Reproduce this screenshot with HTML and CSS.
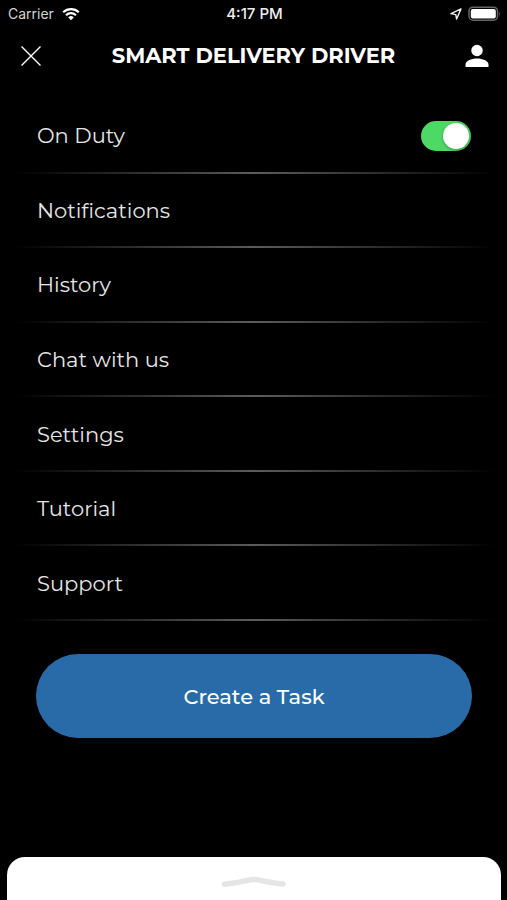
FILE: index.html
```html
<!DOCTYPE html>
<html lang="en">
<head>
<meta charset="utf-8">
<meta name="viewport" content="width=device-width, initial-scale=1">
<title>Smart Delivery Driver</title>
<link rel="stylesheet" href="styles.css">
</head>
<body>
<div class="screen">
  <div class="status">
    <div class="status-left">
      <span class="carrier">Carrier</span>
      <svg width="18" height="14" viewBox="0 0 18 14" aria-hidden="true">
        <g fill="none" stroke="#fff" stroke-width="2.2">
          <path d="M1.2 5.2a11.2 11.2 0 0 1 15.6 0"/>
          <path d="M4 8.2a7.2 7.2 0 0 1 10 0"/>
        </g>
        <path d="M6.2 10.4a4 4 0 0 1 5.6 0L9 13.3z" fill="#fff"/>
      </svg>
    </div>
    <span class="time">4:17 PM</span>
    <div class="status-right">
      <svg width="12" height="12" viewBox="0 0 12 12" aria-hidden="true">
        <path d="M1 5.6L11 .9L6.6 11L5.8 6.6z" fill="none" stroke="#eee" stroke-width="1.4" stroke-linejoin="round"/>
      </svg>
      <svg width="33" height="16" viewBox="0 0 33 16" aria-hidden="true">
        <rect x="1" y="1.2" width="28.5" height="13" rx="4" fill="none" stroke="#66666a" stroke-width="1.5"/>
        <rect x="2.8" y="3" width="25" height="9.6" rx="2" fill="#fff"/>
        <path d="M31 5.5q1.6 2.2 0 4.4z" fill="#66666a"/>
      </svg>
    </div>
  </div>
  <header class="header">
    <button class="icon-button" type="button" aria-label="Close">
      <svg width="22" height="22" viewBox="0 0 22 22" aria-hidden="true">
        <path d="M1.5 1.5l19 19M20.5 1.5l-19 19" stroke="#fff" stroke-width="1.4"/>
      </svg>
    </button>
    <h1 class="title">SMART DELIVERY DRIVER</h1>
    <button class="icon-button" type="button" aria-label="Profile">
      <svg width="24" height="24" viewBox="0 0 24 24" aria-hidden="true">
        <circle cx="12" cy="6.5" r="5.7" fill="#fff"/>
        <path d="M.5 23v-2.2C.5 16.7 6.5 14.6 12 14.6s11.5 2.1 11.5 6.2V23z" fill="#fff"/>
      </svg>
    </button>
  </header>
  <nav>
    <ul class="menu">
      <li class="row">
        <label class="link" for="duty">On Duty</label>
        <input class="switch" type="checkbox" role="switch" id="duty" checked>
      </li>
      <li class="row"><a class="link" href="#notifications">Notifications</a></li>
      <li class="row"><a class="link" href="#history">History</a></li>
      <li class="row"><a class="link" href="#chat">Chat with us</a></li>
      <li class="row"><a class="link" href="#settings">Settings</a></li>
      <li class="row"><a class="link" href="#tutorial">Tutorial</a></li>
      <li class="row"><a class="link" href="#support">Support</a></li>
    </ul>
  </nav>
  <button class="create" type="button">Create a Task</button>
  <button class="sheet" type="button" aria-label="Expand panel">
    <svg width="66" height="12" viewBox="0 0 66 12" aria-hidden="true">
      <path d="M3.5 8.3Q20 6 29 3.8Q33 3 37 3.8Q46 6 62 8" fill="none" stroke="#e5e5e5" stroke-width="5.5" stroke-linecap="round"/>
    </svg>
  </button>
</div>
</body>
</html>
```
FILE: styles.css
```css
* {
  box-sizing: border-box;
}

body {
  margin: 0;
  background: #000;
  color: #fff;
  font-family: Montserrat, Inter, "Liberation Sans", sans-serif;
}

button {
  border: 0;
  padding: 0;
  background: none;
  color: inherit;
  font: inherit;
  cursor: pointer;
}

svg {
  display: block;
}

.screen {
  display: flex;
  flex-direction: column;
  min-height: 100vh;
}

.status {
  display: grid;
  grid-template-columns: 1fr auto 1fr;
  align-items: center;
  height: 27px;
  padding: 0 6px 0 8px;
  font-family: Inter, "Liberation Sans", sans-serif;
  font-size: 14px;
}

.status-left,
.status-right {
  display: flex;
  align-items: center;
  gap: 8px;
}

.status-right {
  gap: 6px;
  justify-content: flex-end;
}

.carrier {
  color: #d4d4d4;
}

.time {
  font-size: 15px;
  font-weight: 500;
  color: #eee;
}

.header {
  display: flex;
  align-items: center;
  justify-content: space-between;
  height: 58px;
  padding: 0 18px 0 20px;
}

.icon-button {
  flex: none;
}

.title {
  margin: 0;
  font-size: 21px;
  line-height: 28px;
  font-weight: 700;
}

.menu {
  display: grid;
  grid-auto-rows: 1fr;
  min-height: 522px;
  margin: 14px 12px 0 15px;
  padding: 0;
  list-style: none;
}

.row {
  display: flex;
  align-items: center;
  padding: 0 24px 0 22px;
  background: linear-gradient(90deg, #000, #5c5c5c 50%, #000) bottom / 100% 2px no-repeat;
}

.link {
  flex: 1;
  color: #e6e6e6;
  font-size: 21px;
  line-height: 28px;
  text-decoration: none;
}

.switch {
  appearance: none;
  display: flex;
  width: 50px;
  height: 30px;
  margin: 0;
  padding: 2px;
  border-radius: 15px;
  background: #555;
}

.switch::before {
  content: "";
  width: 26px;
  height: 26px;
  border-radius: 50%;
  background: #fff;
  box-shadow: 0 1px 3px rgba(0, 0, 0, 0.3);
}

.switch:checked {
  justify-content: flex-end;
  background: #4cd964;
}

.create {
  height: 84px;
  margin: 33px 35px 0 36px;
  border-radius: 42px;
  background: #296ba8;
  font-size: 21px;
  font-weight: 500;
}

.sheet {
  display: flex;
  justify-content: center;
  height: 43px;
  margin: auto 6px 0 7px;
  padding-top: 19px;
  border-radius: 18px 18px 0 0;
  background: #fff;
}
```
